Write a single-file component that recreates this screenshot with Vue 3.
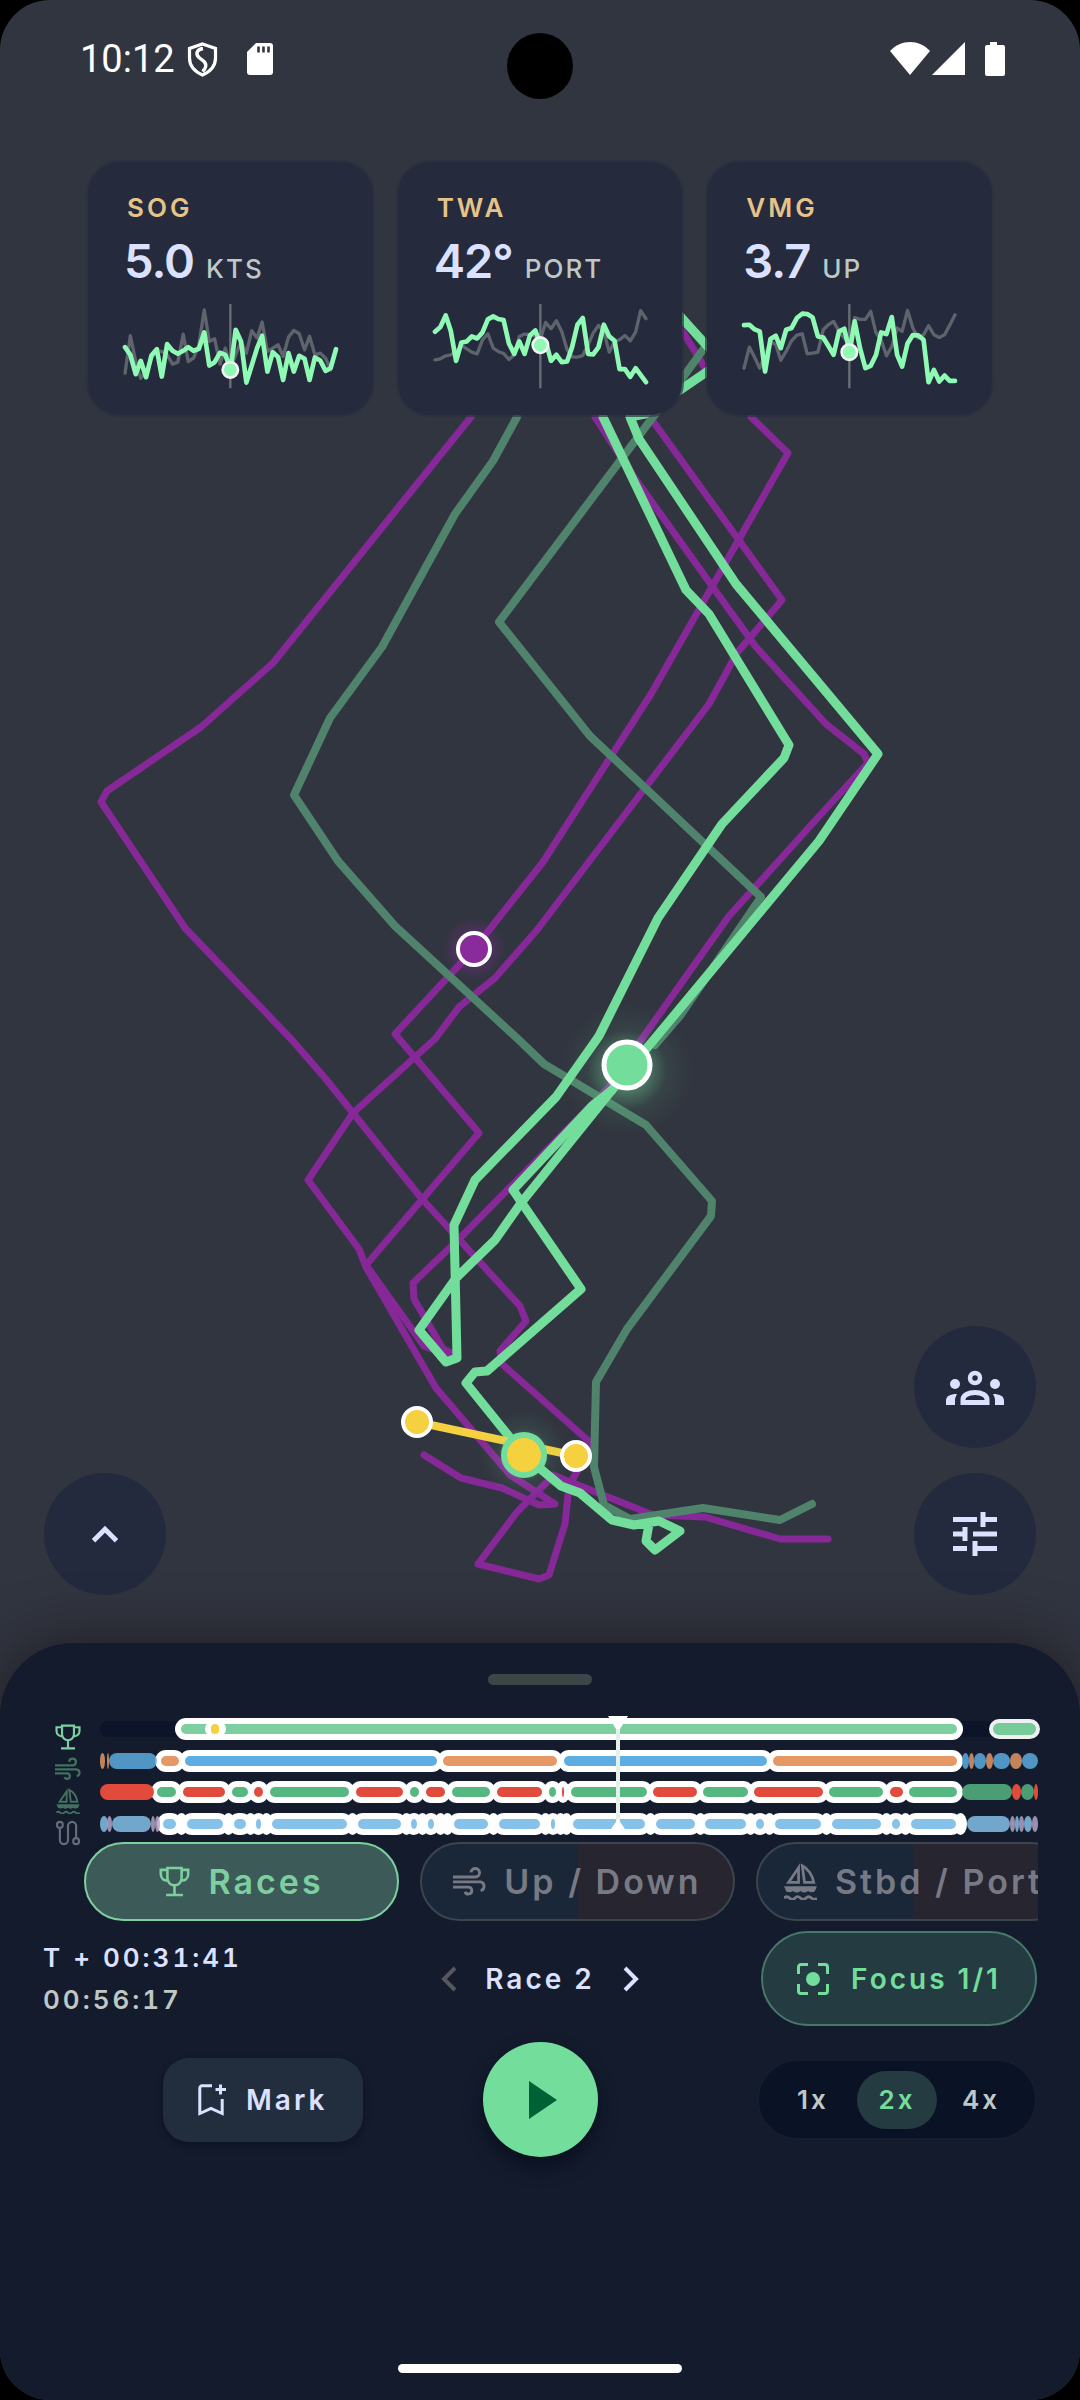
<script setup>
import { ref } from 'vue'

// chart values are distances from the top of the sparkline box
const metrics = [
  {
    label: 'SOG', value: '5.0', unit: 'KTS',
    own: [129, 152, 210, 170, 219, 154, 135, 217, 120, 140, 149, 140, 129, 140, 134, 85, 184, 174, 146, 152, 197, 77, 112, 235, 184, 132, 95, 202, 144, 159, 227, 147, 202, 155, 164, 227, 160, 169, 200, 192, 135],
    other: [207, 95, 172, 222, 202, 162, 140, 142, 152, 180, 174, 90, 172, 162, 122, 18, 112, 104, 180, 132, 192, 152, 112, 147, 80, 102, 54, 142, 132, 122, 157, 99, 79, 89, 137, 97, 152, 147, 162, 197, 142]
  },
  {
    label: 'TWA', value: '42°', unit: 'PORT',
    own: [83, 69, 34, 80, 170, 115, 112, 97, 103, 85, 46, 37, 45, 48, 118, 149, 112, 149, 94, 79, 123, 112, 170, 152, 174, 172, 129, 62, 42, 149, 151, 129, 62, 97, 110, 195, 195, 218, 192, 212, 234],
    other: [167, 164, 155, 152, 142, 124, 134, 144, 149, 107, 89, 132, 142, 148, 166, 152, 97, 90, 92, 97, 102, 55, 74, 50, 82, 137, 158, 159, 154, 122, 87, 64, 82, 144, 112, 107, 94, 110, 84, 20, 44]
  },
  {
    label: 'VMG', value: '3.7', unit: 'UP',
    own: [63, 62, 76, 82, 202, 105, 95, 132, 77, 72, 42, 29, 30, 40, 97, 100, 125, 152, 82, 74, 144, 52, 132, 192, 185, 152, 85, 90, 39, 152, 187, 118, 93, 94, 107, 234, 197, 232, 214, 230, 230],
    other: [192, 129, 160, 192, 152, 112, 122, 168, 142, 110, 93, 89, 149, 147, 144, 77, 62, 52, 82, 102, 112, 41, 46, 46, 22, 87, 107, 155, 127, 72, 82, 19, 72, 102, 92, 65, 92, 100, 92, 64, 32]
  }
]

const toPoints = (ys) => ys.map((y, i) => `${Math.round(9 + i * 15.78)},${y}`).join(' ')

const rivalTracks = [
  '471,417 273,663 201,727 107,791 101,802 185,928 292,1040 325,1078 397,1168 422,1199 520,1306 526,1321 500,1351 502,1364 592,1444 569,1486 565,1524 549,1575 539,1579 478,1564 517,1512 549,1480',
  '553,1475 653,1515 705,1517 780,1539 828,1539',
  '751,417 788,453 651,694 543,862 474,949 395,1034 479,1133 366,1265 424,1346 450,1356',
  '650,417 782,600 737,653 709,704 537,930 495,978 459,1007 435,1039 353,1113 308,1180 359,1249 366,1267 436,1388 510,1475 555,1504 539,1505 502,1488 461,1478 424,1455',
  '595,417 634,477 712,586 756,647 826,724 864,754 868,763 812,824 729,916 641,1040 612,1084 461,1237 413,1283 414,1299 443,1349 455,1355',
  '680,327 708,373'
]
const pastTracks = [
  '517,417 493,461 455,514 382,647 330,718 294,795 338,861 395,926 519,1040 544,1064 646,1125 712,1201 711,1216 627,1329 596,1382 594,1467 604,1505 630,1519 703,1508 780,1520 812,1504',
  '705,347 684,376 653,417 499,622 590,736 761,897 680,1016 655,1045'
]
const ownTracks = [
  '603,417 686,590 709,614 789,745 784,758 722,824 658,918 599,1036 556,1097 475,1180 454,1225 457,1358 446,1362 419,1330 456,1278 495,1240 521,1203 612,1090 687,1000 819,841 878,754 736,584 639,439 630,417 645,414 708,371',
  '680,316 708,347',
  '612,1090 592,1106 513,1190 581,1289 487,1371 475,1372 466,1383 524,1455 561,1486 580,1493 612,1520 634,1525 659,1521 680,1531 655,1550 646,1541 649,1524'
]

// timeline: [start, end, kind, focused]
const lanes = [
  {
    y: 13,
    items: [[181, 957, 'race', 1]]
  },
  {
    y: 45,
    items: [
      [100, 105, 'down', 0], [107, 109, 'down', 0], [109, 157, 'up', 0],
      [161, 179, 'down', 1], [185, 437, 'up', 1], [443, 557, 'down', 1], [564, 767, 'up', 1], [773, 957, 'down', 1],
      [962, 969, 'up', 0], [969, 974, 'down', 0], [974, 986, 'up', 0], [986, 993, 'down', 0],
      [993, 1010, 'up', 0], [1010, 1022, 'down', 0], [1022, 1038, 'up', 0]
    ]
  },
  {
    y: 76,
    items: [
      [100, 154, 'port', 0],
      [157, 176, 'stbd', 1], [183, 225, 'port', 1], [232, 248, 'stbd', 1], [254, 263, 'port', 1],
      [270, 349, 'stbd', 1], [356, 403, 'port', 1], [410, 419, 'stbd', 1], [426, 445, 'port', 1],
      [452, 490, 'stbd', 1], [497, 542, 'port', 1], [549, 556, 'stbd', 1], [562, 564, 'port', 1],
      [571, 647, 'stbd', 1], [653, 697, 'port', 1], [703, 748, 'stbd', 1], [754, 823, 'port', 1],
      [829, 883, 'stbd', 1], [890, 903, 'port', 1], [909, 957, 'stbd', 1],
      [962, 1012, 'stbd', 0], [1012, 1021, 'port', 0], [1021, 1034, 'stbd', 0], [1034, 1038, 'port', 0]
    ]
  },
  {
    y: 108,
    items: [
      [100, 108, 'leg', 0], [107, 112, 'turn', 0], [112, 151, 'leg', 0], [151, 155, 'turn', 0], [155, 160, 'turn', 0],
      [163, 176, 'leg', 1], [181, 182, 'gap', 1], [187, 223, 'leg', 1], [228, 229, 'gap', 1], [234, 246, 'leg', 1],
      [250, 251, 'gap', 1], [256, 261, 'leg', 1], [266, 267, 'gap', 1], [272, 347, 'leg', 1], [352, 353, 'gap', 1],
      [358, 401, 'leg', 1], [406, 407, 'gap', 1], [411, 417, 'leg', 1], [422, 423, 'gap', 1], [428, 434, 'leg', 1],
      [440, 441, 'gap', 1], [447, 448, 'gap', 1], [454, 488, 'leg', 1], [493, 494, 'gap', 1], [499, 540, 'leg', 1],
      [545, 546, 'gap', 1], [551, 555, 'leg', 1], [560, 561, 'gap', 1], [566, 567, 'gap', 1], [573, 645, 'leg', 1],
      [650, 651, 'gap', 1], [656, 695, 'leg', 1], [700, 701, 'gap', 1], [705, 746, 'leg', 1], [750, 751, 'gap', 1],
      [756, 764, 'leg', 1], [769, 770, 'gap', 1], [775, 821, 'leg', 1], [826, 827, 'gap', 1], [832, 881, 'leg', 1],
      [886, 887, 'gap', 1], [892, 900, 'leg', 1], [905, 906, 'gap', 1], [911, 956, 'leg', 1], [960, 961, 'gap', 1],
      [967, 1010, 'leg', 0], [1010, 1015, 'turn', 0], [1015, 1019, 'leg', 0], [1019, 1024, 'turn', 0],
      [1024, 1032, 'leg', 0], [1032, 1038, 'turn', 0]
    ]
  }
]

const tabs = [
  { id: 'races', label: 'Races', icon: 'trophy' },
  { id: 'wind', label: 'Up / Down', icon: 'wind' },
  { id: 'tack', label: 'Stbd / Port', icon: 'boat' }
]
const speeds = ['1x', '2x', '4x']

const activeTab = ref('races')
const speed = ref('2x')
const playing = ref(false)
</script>

<template>
  <div class="screen">
    <!-- shared symbols -->
    <svg class="defs" aria-hidden="true">
      <symbol id="trophy" viewBox="0 0 24 24">
        <g fill="none" stroke="currentColor" stroke-width="2">
          <path d="M6.5 1.5h11v8a5.5 5.5 0 0 1-11 0z" />
          <path d="M6.5 3H1.4v3.5a4.6 4.6 0 0 0 5.6 4.6M17.5 3h5.1v3.5a4.6 4.6 0 0 1-5.6 4.6" />
          <path d="M12 15v7M5.5 22.5h13" />
        </g>
      </symbol>
      <symbol id="wind" viewBox="0 0 24 24">
        <g fill="none" stroke="currentColor" stroke-width="2.1">
          <path d="M0 8.7h16.3a3.1 3.1 0 1 0-3.2-3.3" />
          <path d="M0 12.3h19.8a3.2 3.2 0 0 1 .3 6.3" />
          <path d="M0 16.1h11.3a2.5 2.5 0 1 1-2.5 3.3" />
        </g>
      </symbol>
      <symbol id="boat" viewBox="0 0 24 27">
        <g fill="none" stroke="currentColor" stroke-width="2">
          <path d="M10.6 3.5V14.2H3.3z" />
          <path d="M13.3 2C17.5 4 20.8 9 21.7 14.2h-6.8z" />
          <path d="M0 25.6q2-2 4 0t4 0t4 0t4 0t4 0t4 0" />
        </g>
        <path d="M0 17h24l-1.5 3.6q-2.5 1.5-5-.2q-2.7 2.4-5.5 0q-2.8 2.4-5.5 0q-2.5 1.7-5 .2z" fill="currentColor" />
      </symbol>
      <symbol id="route" viewBox="0 0 24 24">
        <g fill="none" stroke="currentColor" stroke-width="2">
          <circle cx="4.5" cy="4.5" r="2.7" />
          <circle cx="19.5" cy="19.5" r="2.7" />
          <path d="M4.5 7.5v11a3.7 3.7 0 0 0 7.5 0v-13a3.7 3.7 0 0 1 7.5 0v11" />
        </g>
      </symbol>
    </svg>

    <svg class="map" viewBox="0 0 1080 1700" role="img" aria-label="Race tracks">
      <defs>
        <radialGradient id="glow-own">
          <stop offset="0.3" stop-color="#73dd9b" stop-opacity="0.4" />
          <stop offset="0.6" stop-color="#73dd9b" stop-opacity="0.08" />
          <stop offset="1" stop-color="#73dd9b" stop-opacity="0" />
        </radialGradient>
        <radialGradient id="glow-rival">
          <stop offset="0.4" stop-color="#8a2b9b" stop-opacity="0.4" />
          <stop offset="1" stop-color="#8a2b9b" stop-opacity="0" />
        </radialGradient>
      </defs>
      <g class="tracks">
        <polyline v-for="p in rivalTracks" :key="p" class="rival" :points="p" />
        <polyline v-for="p in pastTracks" :key="p" class="past" :points="p" />
        <polyline v-for="p in ownTracks" :key="p" class="own" :points="p" />
        <path class="start-line" d="M417 1422L576 1456" />
      </g>
      <circle cx="474" cy="949" r="32" fill="url(#glow-rival)" />
      <circle cx="474" cy="949" r="16" fill="#8a2b9b" stroke="#fff" stroke-width="4" />
      <circle cx="627" cy="1070" r="66" fill="url(#glow-own)" />
      <circle cx="627" cy="1065" r="23" fill="#73dd9b" stroke="#fff" stroke-width="5" />
      <circle cx="524" cy="1455" r="44" fill="url(#glow-own)" />
      <circle cx="417" cy="1422" r="14" fill="#f5d03f" stroke="#fff" stroke-width="4" />
      <circle cx="576" cy="1456" r="14" fill="#f5d03f" stroke="#fff" stroke-width="4" />
      <circle cx="524" cy="1455" r="20" fill="#f5d03f" stroke="#73dd9b" stroke-width="6" />
    </svg>

    <header class="status">
      <span class="clock">10:12</span>
      <svg class="shield" viewBox="0 0 31 35" aria-hidden="true">
        <path d="M15.5 2L28.5 6.5V16c0 8-5 13.5-13 17c-8-3.5-13-9-13-17V6.5z" fill="none" stroke="currentColor" stroke-width="3.2" />
        <path d="M16 6.5c-6 1-8 5-4 9l5 4c3 3 2 7-1.500 10" fill="none" stroke="currentColor" stroke-width="3.4" />
      </svg>
      <svg class="sd" viewBox="0 0 26 32" aria-hidden="true">
        <path d="M9 0H23a3 3 0 0 1 3 3V29a3 3 0 0 1-3 3H3a3 3 0 0 1-3-3V9z" fill="currentColor" />
        <path d="M11.5 3.5v6M16.5 3.5v6M21.5 3.5v6" stroke="#31353f" stroke-width="2.6" />
      </svg>
      <span class="grow"></span>
      <svg class="signals" viewBox="0 0 116 34" aria-hidden="true">
        <path d="M0 9C11-3 29-3 40 9L20 33z" fill="currentColor" />
        <path d="M75 0V33H42z" fill="currentColor" />
        <path d="M100 0h7v3h6a2 2 0 0 1 2 2V32a2 2 0 0 1-2 2H97a2 2 0 0 1-2-2V5a2 2 0 0 1 2-2h3z" fill="currentColor" />
      </svg>
    </header>
    <div class="camera"></div>

    <section class="metrics">
      <article v-for="m in metrics" :key="m.label" class="card">
        <h2 class="label">{{ m.label }}</h2>
        <p class="reading">
          <strong class="value">{{ m.value }}</strong>
          <span class="unit">{{ m.unit }}</span>
        </p>
        <svg class="spark" viewBox="0 0 648 252" aria-hidden="true">
          <polyline :points="toPoints(m.other)" class="line other" />
          <path d="M324 0V252" class="cursor" />
          <polyline :points="toPoints(m.own)" class="line mine" />
          <circle cx="324" :cy="m.own[20]" r="23" class="dot" />
        </svg>
      </article>
    </section>

    <div class="fabs">
      <button class="fab" type="button" aria-label="Expand">
        <svg viewBox="0 0 48 48"><path d="M12 31L24 19L36 31" fill="none" stroke="currentColor" stroke-width="5" /></svg>
      </button>
      <div class="fab-stack">
        <button class="fab" type="button" aria-label="Crew">
          <svg class="people" viewBox="0 0 58 36">
            <circle cx="9" cy="15" r="5" fill="currentColor" />
            <circle cx="49" cy="15" r="5" fill="currentColor" />
            <path d="M0 36v-4c0-5 4-7 11-7c-1 2-2 4-2 6v5zM58 36v-4c0-5-4-7-11-7c1 2 2 4 2 6v5z" fill="currentColor" />
            <circle cx="29" cy="9" r="5" fill="none" stroke="currentColor" stroke-width="4.5" />
            <path d="M17 33.5v-3c0-4 5-7 12-7s12 3 12 7v3z" fill="none" stroke="currentColor" stroke-width="5" />
          </svg>
        </button>
        <button class="fab" type="button" aria-label="Settings">
          <svg viewBox="0 0 46 46">
            <path d="M1 8.5h24M31 1v15M31 8.5h14M1 23h14M13 16v14M21 23h24M1 37.5h14M23 30v15M23 37.5h22" fill="none" stroke="currentColor" stroke-width="5" />
          </svg>
        </button>
      </div>
    </div>

    <section class="sheet">
      <div class="handle"></div>

      <div class="timeline">
        <div class="lane-icons">
          <svg class="on"><use href="#trophy" /></svg>
          <svg class="muted"><use href="#wind" /></svg>
          <svg class="muted"><use href="#boat" /></svg>
          <svg class="off"><use href="#route" /></svg>
        </div>
        <svg class="lanes" viewBox="99 0 939 124" role="img" aria-label="Race timeline">
          <rect x="100" y="5" width="938" height="16" rx="8" fill="#0b1428" />
          <g v-for="lane in lanes" :key="lane.y">
            <template v-for="s in lane.items" :key="s[0]">
              <rect v-if="s[3]" class="focus-ring" :x="s[0] - 6" :y="lane.y - 11" :width="s[1] - s[0] + 12" height="22" rx="11" />
            </template>
            <template v-for="s in lane.items" :key="s[0]">
              <rect v-if="s[3]" :class="s[2]" :x="s[0]" :y="lane.y - 5" :width="s[1] - s[0]" height="10" rx="5" />
              <rect v-else :class="[s[2], 'plain']" :x="s[0]" :y="lane.y - 8" :width="s[1] - s[0]" height="16" rx="8" />
            </template>
          </g>
          <rect x="205" y="5" width="21" height="16" rx="8" fill="#fff" />
          <rect x="211" y="8" width="8" height="10" rx="4" fill="#f5d03f" />
          <rect x="991" y="5" width="47" height="16" rx="8" fill="#76cb99" stroke="#eff0f2" stroke-width="4" />
          <path d="M618 4V113" stroke="#e3f1e9" stroke-width="4" />
          <path d="M608 0h20l-8 13h-4zM611 113l7-10l7 10z" fill="#fff" />
        </svg>
      </div>

      <nav class="tabs">
        <button
          v-for="t in tabs"
          :key="t.id"
          type="button"
          class="tab"
          :class="{ active: activeTab === t.id }"
          @click="activeTab = t.id"
        >
          <svg class="tab-icon" :class="t.icon"><use :href="'#' + t.icon" /></svg>
          <span>{{ t.label }}</span>
        </button>
      </nav>

      <div class="row info">
        <div class="times">
          <time class="elapsed">T + 00:31:41</time>
          <time class="total">00:56:17</time>
        </div>
        <div class="race-picker">
          <button class="step" type="button" aria-label="Previous race" disabled>
            <svg viewBox="0 0 16 26"><path d="M14 2L3 13L14 24" fill="none" stroke="currentColor" stroke-width="4" /></svg>
          </button>
          <span class="race-name">Race 2</span>
          <button class="step" type="button" aria-label="Next race">
            <svg viewBox="0 0 16 26"><path d="M2 2L13 13L2 24" fill="none" stroke="currentColor" stroke-width="4" /></svg>
          </button>
        </div>
        <button class="focus" type="button">
          <svg viewBox="0 0 32 32">
            <path d="M1.5 11V4a2.5 2.5 0 0 1 2.5-2.5h7M21 1.5h7a2.5 2.5 0 0 1 2.5 2.5v7M30.5 21v7a2.5 2.5 0 0 1-2.5 2.5h-7M11 30.5H4a2.5 2.5 0 0 1-2.5-2.5v-7" fill="none" stroke="currentColor" stroke-width="3" />
            <circle cx="16" cy="16" r="7" fill="currentColor" />
          </svg>
          <span>Focus 1/1</span>
        </button>
      </div>

      <div class="row controls">
        <button class="mark" type="button">
          <svg viewBox="0 0 28 32">
            <path d="M14 1.8H4a2.2 2.2 0 0 0-2.2 2.2V29.5L13 24.5L24.2 29.5V15" fill="none" stroke="currentColor" stroke-width="3" />
            <path d="M22.5 .5v10M17.5 5.5h10.5" stroke="currentColor" stroke-width="3" />
          </svg>
          <span>Mark</span>
        </button>
        <button class="play" type="button" aria-label="Play" @click="playing = !playing">
          <svg viewBox="0 0 28 38"><path d="M0 0L28 19L0 38z" fill="currentColor" /></svg>
        </button>
        <div class="speeds">
          <button
            v-for="s in speeds"
            :key="s"
            type="button"
            class="speed"
            :class="{ active: speed === s }"
            @click="speed = s"
          >{{ s }}</button>
        </div>
      </div>

      <div class="home-bar"></div>
    </section>
  </div>
</template>

<style>
body {
  background: #000;
}
</style>

<style scoped>
* {
  box-sizing: border-box;
}

button {
  border: none;
  padding: 0;
  background: none;
  color: inherit;
  font: inherit;
  letter-spacing: inherit;
  cursor: pointer;
}

.screen {
  position: relative;
  display: flex;
  flex-direction: column;
  min-height: 100vh;
  overflow: hidden;
  border-radius: 50px;
  background: #31353f;
  color: #dbe1ff;
  font-family: Inter, "Noto Sans", sans-serif;
  font-weight: 600;
  letter-spacing: 3px;
}

.defs {
  position: absolute;
  width: 0;
  height: 0;
}

/* map */
.map {
  position: absolute;
  top: 0;
  left: 0;
  width: 100%;
}
.tracks {
  fill: none;
  stroke-linecap: round;
  stroke-linejoin: round;
}
.rival { stroke: #862897; stroke-width: 7; }
.past { stroke: #50836b; stroke-width: 8; }
.own { stroke: #73dd9b; stroke-width: 9; }
.start-line { stroke: #f5d03f; stroke-width: 8; }

/* status bar */
.status {
  position: relative;
  display: flex;
  align-items: center;
  height: 118px;
  margin-bottom: 44px;
  padding: 0 74px 0 80px;
  color: #fff;
}
.clock {
  font-family: Roboto, sans-serif;
  font-size: 38px;
  font-weight: 400;
  letter-spacing: 0;
}
.shield { width: 31px; height: 35px; margin-left: 12px; }
.sd { width: 26px; height: 32px; margin-left: 29px; }
.signals { width: 116px; height: 34px; }
.grow { flex: 1; }
.camera {
  position: absolute;
  top: 33px;
  left: 50%;
  width: 66px;
  height: 66px;
  margin-left: -33px;
  border-radius: 50%;
  background: #000;
}

/* metric cards */
.metrics {
  position: relative;
  display: grid;
  grid-template-columns: repeat(3, 1fr);
  gap: 25px;
  padding: 0 88px;
}
.card {
  padding: 30px 34px 27px;
  border-radius: 32px;
  background: #252b3d;
  box-shadow: 0 0 0 2px rgba(43, 48, 64, 0.7);
}
.label {
  margin: 0 0 8px 5px;
  color: #e6c388;
  font-size: 26px;
  font-weight: 600;
  line-height: 32px;
}
.reading {
  display: flex;
  align-items: baseline;
  gap: 12px;
  height: 58px;
  margin: 0 0 14px 2px;
}
.value {
  font-size: 47px;
  font-weight: 600;
  line-height: 58px;
  letter-spacing: -1px;
}
.unit {
  color: #bfc8c4;
  font-size: 26px;
  font-weight: 500;
  line-height: 32px;
  letter-spacing: 2px;
}
.spark {
  display: block;
  width: 100%;
  overflow: visible;
}
.line {
  fill: none;
  stroke-linecap: round;
  stroke-linejoin: round;
}
.other { stroke: #5e636c; stroke-width: 10; }
.mine { stroke: #8ffab4; stroke-width: 14; }
.cursor { stroke: #6a6e76; stroke-width: 7; }
.dot { fill: #8ffab4; stroke: #f1f3f3; stroke-width: 8; }

/* floating buttons */
.fabs {
  position: relative;
  flex: 1;
  display: flex;
  align-items: flex-end;
  justify-content: space-between;
  padding: 0 44px 48px;
}
.fab-stack {
  display: flex;
  flex-direction: column;
  gap: 25px;
}
.fab {
  display: flex;
  align-items: center;
  justify-content: center;
  width: 122px;
  height: 122px;
  border-radius: 50%;
  background: #242a3d;
}
.fab svg { width: 46px; height: 46px; }
.fab .people { width: 58px; height: 36px; }

/* bottom sheet */
.sheet {
  position: relative;
  padding-top: 31px;
  border-radius: 73px 73px 0 0;
  background: #131b2d;
  box-shadow: 0 0 60px rgba(20, 12, 20, 0.6);
}
.handle {
  width: 104px;
  height: 11px;
  margin: 0 auto 31px;
  border-radius: 6px;
  background: #3c4649;
}

.timeline {
  display: flex;
  align-items: flex-start;
  gap: 18px;
  padding: 0 42px 2px 55px;
}
.lane-icons {
  display: flex;
  flex-direction: column;
  gap: 6px;
  padding-top: 8px;
  margin-bottom: -6px;
}
.lane-icons svg { width: 26px; height: 26px; }
.lane-icons .on { color: #7dcfa0; }
.lane-icons .muted { color: #43705f; }
.lane-icons .off { color: #666b7a; }
.lanes {
  flex: 1;
  min-width: 0;
  overflow: visible;
}
.focus-ring, .gap { fill: #fff; }
.race { fill: #7dcfa0; }
.up { fill: #5dade2; }
.down { fill: #e59866; }
.stbd { fill: #56b881; }
.port { fill: #e24a3b; }
.leg { fill: #85c1e9; }
.turn { fill: #b9a5c6; }
.plain { opacity: 0.84; }
.port.plain { opacity: 1; }

.tabs {
  display: flex;
  gap: 21px;
  overflow: hidden;
  margin: 0 42px 10px 84px;
}
.tab {
  flex: none;
  display: flex;
  align-items: center;
  justify-content: center;
  gap: 18px;
  width: 315px;
  height: 79px;
  border: 2px solid #3c444c;
  border-radius: 40px;
  background: linear-gradient(90deg, #1a2738 50%, #262530 50%);
  color: #777a84;
  font-size: 34px;
  white-space: nowrap;
}
.tab.active {
  border-color: #7dcfa0;
  background: #3c5a58;
  color: #7dcfa0;
}
.tab-icon { width: 33px; height: 33px; }
.tab-icon.boat { height: 37px; }
.tab-icon.trophy { width: 31px; height: 31px; }

.row {
  display: grid;
  grid-template-columns: 1fr auto 1fr;
  align-items: center;
  padding: 0 43px;
}
.times {
  display: flex;
  flex-direction: column;
  font-size: 26px;
  font-variant-numeric: tabular-nums;
  line-height: 42px;
}
.total { color: #bfc8c4; }
.race-picker {
  display: flex;
  align-items: center;
  gap: 28px;
  font-size: 28px;
}
.step { display: flex; }
.step svg { width: 16px; height: 26px; }
.step:disabled { color: #55565f; }
.focus {
  justify-self: end;
  display: flex;
  align-items: center;
  justify-content: center;
  gap: 22px;
  width: 276px;
  height: 95px;
  border: 2px solid #47796a;
  border-radius: 48px;
  background: #243c41;
  color: #73dd9b;
  font-size: 28px;
}
.focus svg { width: 32px; height: 32px; }

.controls { margin-top: 16px; }
.mark {
  justify-self: center;
  display: flex;
  align-items: center;
  justify-content: center;
  gap: 20px;
  width: 200px;
  height: 84px;
  border-radius: 26px;
  background: #222d3e;
  box-shadow: 0 4px 8px rgba(0, 0, 0, 0.3);
  font-size: 28px;
}
.mark svg { width: 28px; height: 32px; }
.play {
  display: flex;
  align-items: center;
  justify-content: center;
  width: 115px;
  height: 115px;
  padding-left: 6px;
  border-radius: 50%;
  background: #73dd9b;
  box-shadow: 0 10px 18px rgba(4, 10, 24, 0.6);
  color: #006135;
}
.play svg { width: 28px; height: 38px; }
.speeds {
  justify-self: end;
  display: flex;
  align-items: center;
  gap: 4px;
  height: 81px;
  padding: 0 14px;
  border: 2px solid #151e2e;
  border-radius: 41px;
  background: #0a1226;
}
.speed {
  width: 80px;
  height: 58px;
  border-radius: 29px;
  color: #bfc8c4;
  font-size: 26px;
}
.speed.active {
  background: #243c41;
  color: #73dd9b;
}

.home-bar {
  width: 284px;
  height: 9px;
  margin: 207px auto 27px;
  border-radius: 5px;
  background: #fff;
}
</style>
